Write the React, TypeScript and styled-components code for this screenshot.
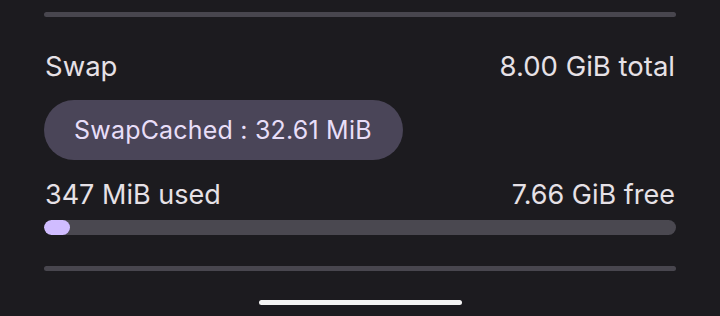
import React from "react";
import styled, { createGlobalStyle } from "styled-components";

const Global = createGlobalStyle`
  html, body { margin: 0; padding: 0; background: #1c1b1f; }
  body { font-family: Inter, "Noto Sans", sans-serif; -webkit-font-smoothing: antialiased; }
`;

const Screen = styled.div`
  width: 720px;
  height: 316px;
  background: #1c1b1f;
  box-sizing: border-box;
  padding: 11.5px 44px 0;
  display: flex;
  flex-direction: column;
  overflow: hidden;
`;

const Divider = styled.div<{ $mt?: number }>`
  height: 5px;
  border-radius: 3px;
  background: #48464e;
  margin-top: ${(p) => p.$mt ?? 0}px;
`;

const Row = styled.div<{ $mt: number; $size: number; $lh: number }>`
  display: flex;
  justify-content: space-between;
  align-items: baseline;
  margin-top: ${(p) => p.$mt}px;
  font-size: ${(p) => p.$size}px;
  line-height: ${(p) => p.$lh}px;
  color: #e6e1e6;
  padding: 0 1px;
`;

const Chip = styled.div`
  align-self: flex-start;
  margin-top: 17px;
  height: 60px;
  border-radius: 30px;
  background: #4a4558;
  color: #e8def8;
  font-size: 25px;
  letter-spacing: 0.2px;
  display: flex;
  align-items: center;
  padding: 0 31px 0 30px;
  white-space: nowrap;
`;

const Track = styled.div`
  margin-top: 9px;
  height: 15px;
  border-radius: 8px;
  background: #4a4850;
  overflow: hidden;
`;

const Fill = styled.div`
  height: 100%;
  border-radius: 8px;
  background: #d0bcff;
`;

const HomeBar = styled.div`
  align-self: center;
  margin-top: 29px;
  width: 203px;
  height: 5px;
  border-radius: 3px;
  background: #f4f4f4;
`;

export default function App() {
  const fillPct = (26 / 632) * 100;
  return (
    <>
      <Global />
      <Screen>
        <Divider />
        <Row $mt={32.5} $size={27.5} $lh={34}>
          <span>Swap</span>
          <span>8.00 GiB total</span>
        </Row>
        <Chip>SwapCached : 32.61 MiB</Chip>
        <Row $mt={19} $size={27} $lh={32}>
          <span>347 MiB used</span>
          <span>7.66 GiB free</span>
        </Row>
        <Track>
          <Fill style={{ width: `${fillPct}%` }} />
        </Track>
        <Divider $mt={31} />
        <HomeBar />
      </Screen>
    </>
  );
}
